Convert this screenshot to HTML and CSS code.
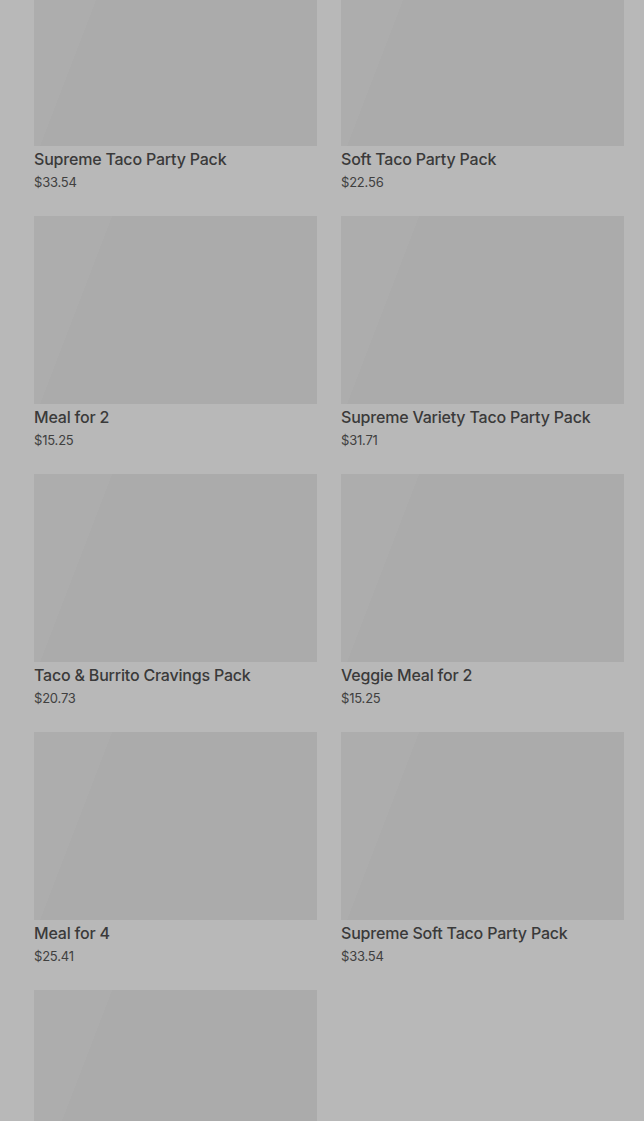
FILE: index.html
```html
<!DOCTYPE html>
<html lang="en">
<head>
    <meta charset="UTF-8">
    <meta name="viewport" content="width=device-width, initial-scale=1.0">
    <title>Party Packs</title>
    <link rel="stylesheet" href="styles.css">
</head>
<body>
    <div class="products">
        <div class="product">
            <div class="product-image"></div>
            <div class="product-name">Supreme Taco Party Pack</div>
            <div class="product-price">$33.54</div>
        </div>
        <div class="product">
            <div class="product-image"></div>
            <div class="product-name">Soft Taco Party Pack</div>
            <div class="product-price">$22.56</div>
        </div>
        <div class="product">
            <div class="product-image"></div>
            <div class="product-name">Meal for 2</div>
            <div class="product-price">$15.25</div>
        </div>
        <div class="product">
            <div class="product-image"></div>
            <div class="product-name">Supreme Variety Taco Party Pack</div>
            <div class="product-price">$31.71</div>
        </div>
        <div class="product">
            <div class="product-image"></div>
            <div class="product-name">Taco &amp; Burrito Cravings Pack</div>
            <div class="product-price">$20.73</div>
        </div>
        <div class="product">
            <div class="product-image"></div>
            <div class="product-name">Veggie Meal for 2</div>
            <div class="product-price">$15.25</div>
        </div>
        <div class="product">
            <div class="product-image"></div>
            <div class="product-name">Meal for 4</div>
            <div class="product-price">$25.41</div>
        </div>
        <div class="product">
            <div class="product-image"></div>
            <div class="product-name">Supreme Soft Taco Party Pack</div>
            <div class="product-price">$33.54</div>
        </div>
        <div class="product">
            <div class="product-image"></div>
            <div class="product-name"></div>
            <div class="product-price"></div>
        </div>
    </div>
</body>
</html>
```

FILE: styles.css
```css
html, body {
    margin: 0;
    background-color: #b8b8b8;
    overflow: hidden;
}

body {
    font-family: Inter, "Noto Sans", sans-serif;
    height: 1121px;
}

.products {
    display: grid;
    grid-template-columns: 283px 283px;
    column-gap: 24px;
    row-gap: 24px;
    padding: 0 20px 0 34px;
    margin-top: -42px;
}

.product-image {
    height: 188px;
    background: linear-gradient(111deg, #adadad 0, #adadad 73px, #ababab 73px, #ababab 100%);
}

.product-name {
    margin-top: 3px;
    font-size: 16px;
    font-weight: 500;
    line-height: 20px;
    letter-spacing: -0.2px;
    color: #3a3a3a;
    height: 20px;
}

.product-price {
    margin-top: 3px;
    font-size: 13px;
    line-height: 20px;
    letter-spacing: -0.2px;
    color: #404040;
    height: 20px;
}
```
